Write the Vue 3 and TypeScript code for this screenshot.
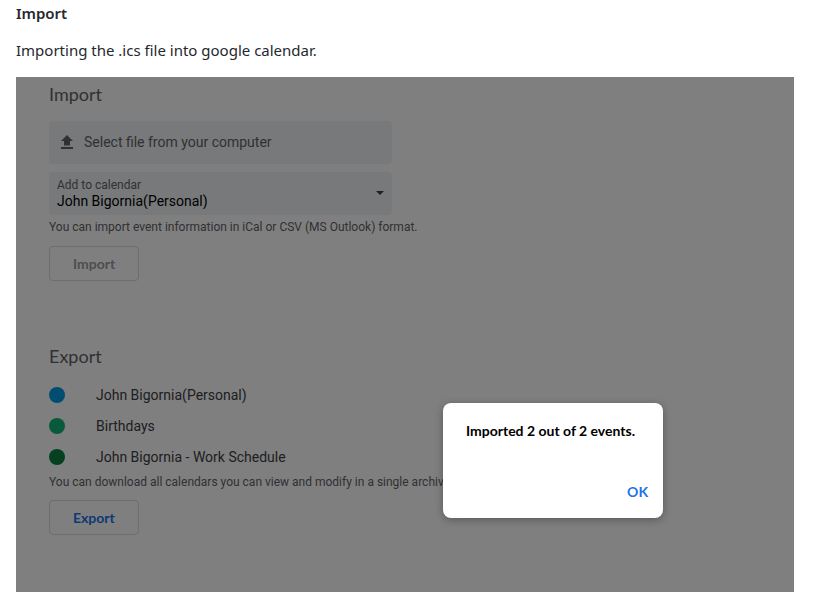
<script setup lang="ts">
import { ref } from 'vue'

interface Calendar {
  name: string
  color: string
}

const calendars: Calendar[] = [
  { name: 'John Bigornia(Personal)', color: '#039be5' },
  { name: 'Birthdays', color: '#0eb679' },
  { name: 'John Bigornia - Work Schedule', color: '#0b8043' },
]

const target = ref(calendars[0].name)
const dialogOpen = ref(true)
</script>

<template>
  <main class="page">
    <h1 class="title">Import</h1>
    <p class="intro">Importing the .ics file into google calendar.</p>

    <div class="panel">
      <section class="import">
        <h2 class="heading">Import</h2>
        <button type="button" class="field picker">
          <svg class="upload" viewBox="0 0 14 16" aria-hidden="true">
            <path d="M7 1L13 7H10V11.5H4V7H1ZM1 13H13V15H1Z" />
          </svg>
          <span>Select file from your computer</span>
        </button>
        <div class="field chooser">
          <div class="chooser-text">
            <label for="target">Add to calendar</label>
            <select id="target" v-model="target">
              <option v-for="c in calendars" :key="c.name">{{ c.name }}</option>
            </select>
          </div>
          <svg class="caret" viewBox="0 0 8 4" aria-hidden="true"><path d="M0 0H8L4 4Z" /></svg>
        </div>
        <p class="hint">You can import event information in iCal or CSV (MS Outlook) format.</p>
        <button type="button" class="action" disabled>Import</button>
      </section>

      <section class="export">
        <h2 class="heading">Export</h2>
        <ul class="calendars">
          <li v-for="c in calendars" :key="c.name">
            <span class="dot" :style="{ background: c.color }"></span>
            <span>{{ c.name }}</span>
          </li>
        </ul>
        <p class="hint">You can download all calendars you can view and modify in a single archive.</p>
        <button type="button" class="action">Export</button>
      </section>

      <div v-if="dialogOpen" class="scrim">
        <div class="dialog" role="alertdialog" aria-labelledby="message">
          <p id="message" class="message">Imported 2 out of 2 events.</p>
          <button type="button" class="ok" @click="dialogOpen = false">OK</button>
        </div>
      </div>
    </div>
  </main>
</template>

<style>
body {
  margin: 0;
  background: #fff;
}
</style>

<style scoped>
* {
  box-sizing: border-box;
}

h1,
h2,
p,
ul {
  margin: 0;
  padding: 0;
}

button,
select {
  margin: 0;
  padding: 0;
  border: 0;
  background: none;
  font: inherit;
  color: inherit;
}

.page {
  padding: 0 21px 20px 16px;
  font-family: 'Noto Sans', sans-serif;
  color: #24292e;
}

.title {
  font-size: 15px;
  line-height: 26px;
  font-weight: 600;
}

.intro {
  margin: 12px 0 14px;
  font-size: 15px;
  line-height: 25px;
}

.panel {
  position: relative;
  padding: 5px 33px 57px;
  background: #fff;
  font-family: Roboto, sans-serif;
  font-size: 14px;
  color: #3c4043;
}

.heading {
  font-family: Lato, sans-serif;
  font-size: 18px;
  line-height: 24px;
  font-weight: 400;
  color: #5f6368;
}

.field {
  display: flex;
  align-items: center;
  width: 100%;
  max-width: 343px;
  height: 43px;
  border-radius: 4px;
  background: #f1f3f4;
}

.picker {
  gap: 10px;
  margin-top: 15px;
  padding: 0 11px 2px;
  color: #5f6368;
}

.upload {
  width: 14px;
  height: 16px;
  fill: #5f6368;
}

.chooser {
  margin-top: 8px;
  padding: 0 8px 2px;
}

.chooser-text {
  display: flex;
  flex: 1;
  flex-direction: column;
}

.chooser label {
  font-size: 12px;
  line-height: 16px;
  color: #5f6368;
}

.chooser select {
  appearance: none;
  line-height: 16px;
  color: #000;
}

.caret {
  width: 8px;
  height: 4px;
  fill: #3c4043;
}

.hint {
  font-size: 12px;
  line-height: 16px;
  color: #5f6368;
}

.import .hint {
  margin: 4px 0 11px;
}

.action {
  height: 35px;
  padding: 0 23px;
  border: 1px solid #dadce0;
  border-radius: 4px;
  font-family: Lato, sans-serif;
  font-size: 14px;
  font-weight: 700;
  color: #1a73e8;
}

.action:disabled {
  color: #9a9c9f;
}

.export {
  margin-top: 63px;
}

.calendars {
  margin-top: 11px;
  list-style: none;
}

.calendars li {
  display: flex;
  align-items: center;
  gap: 31px;
  height: 31px;
}

.dot {
  width: 16px;
  height: 16px;
  border-radius: 50%;
}

.export .hint {
  margin: 2px 0 10px;
}

.scrim {
  position: absolute;
  inset: 0;
  background: rgba(0, 0, 0, 0.5);
}

.dialog {
  position: absolute;
  right: 131px;
  bottom: 74px;
  display: flex;
  flex-direction: column;
  justify-content: space-between;
  width: 220px;
  height: 115px;
  padding: 18px 15px 16px 23px;
  border-radius: 8px;
  background: #fff;
  box-shadow: 0 2px 8px rgba(0, 0, 0, 0.3);
  font-family: Lato, sans-serif;
  font-size: 14px;
  line-height: 20px;
  font-weight: 700;
}

.message {
  color: #000;
  white-space: nowrap;
}

.ok {
  align-self: flex-end;
  color: #1a73e8;
}
</style>
